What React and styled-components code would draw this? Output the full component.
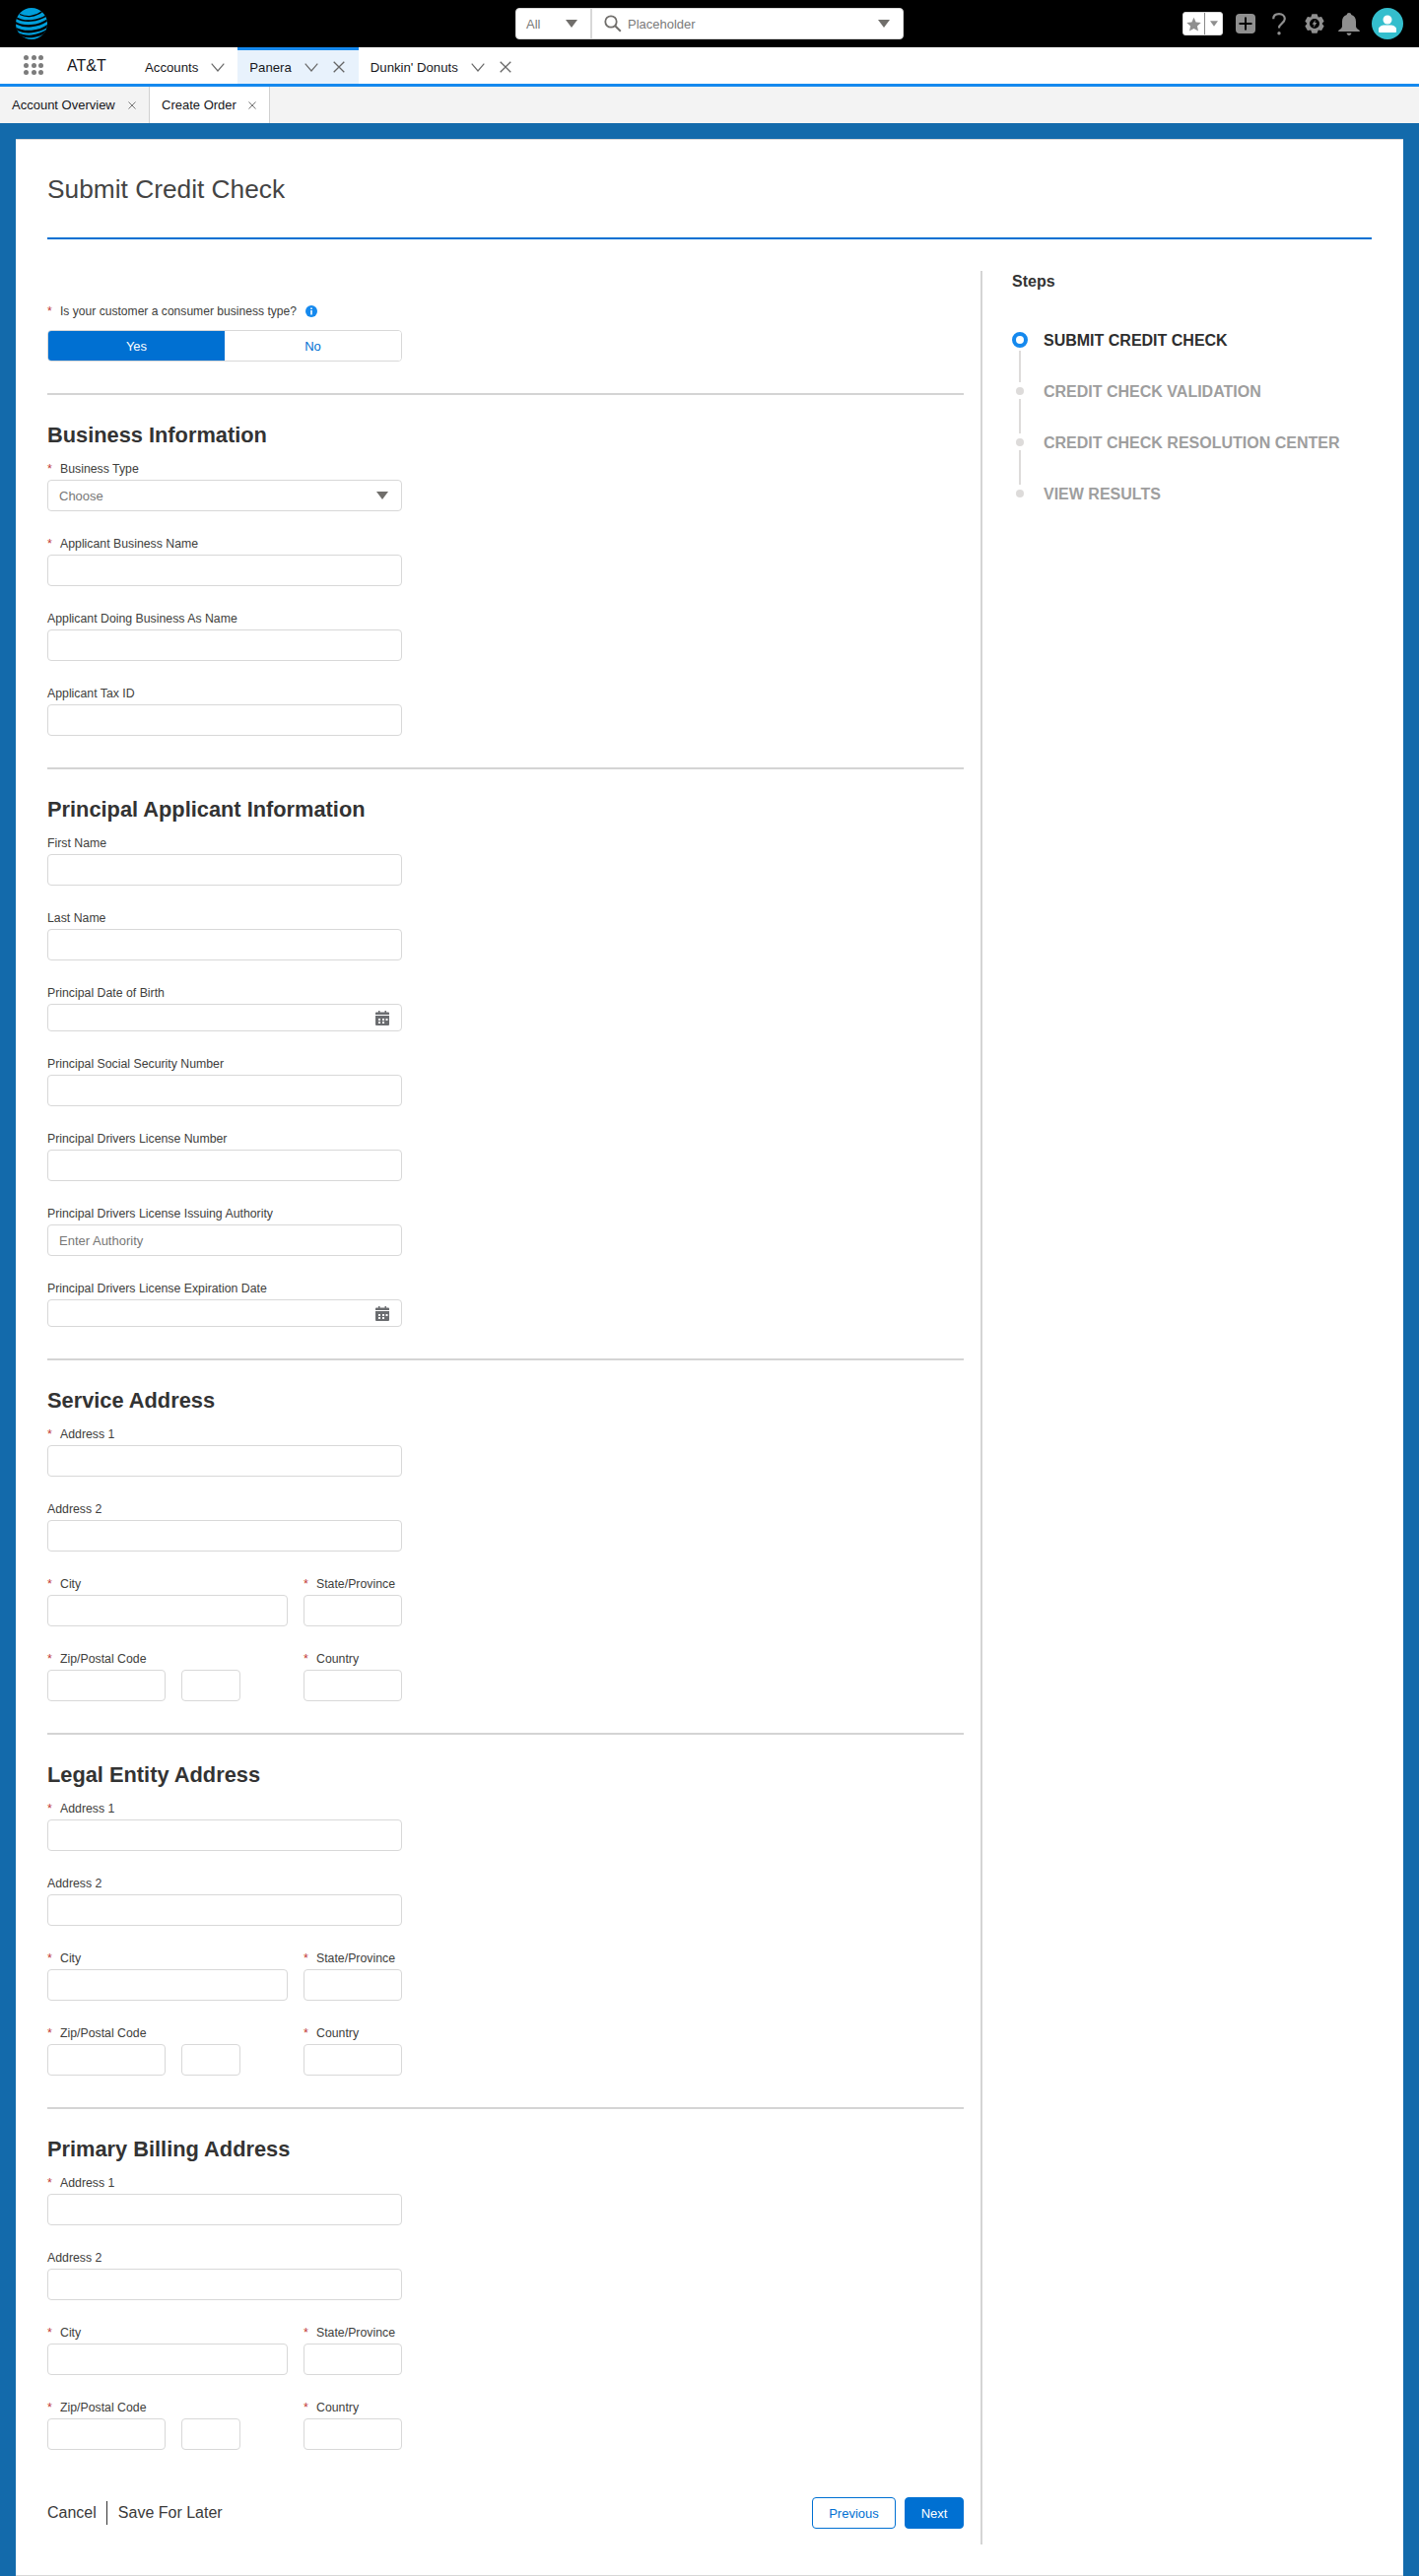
import styled, { createGlobalStyle } from "styled-components";

const GlobalStyle = createGlobalStyle`
  html, body {
    margin: 0;
    padding: 0;
    background: #136aab;
    font-family: "Liberation Sans", Arial, sans-serif;
    color: #3e3e3c;
  }
  * {
    box-sizing: border-box;
  }
`;

const Header = styled.header`
  height: 48px;
  background: #000;
  display: grid;
  grid-template-columns: 1fr 394px 1fr;
  align-items: center;
  padding: 0 16px;
`;

const SearchBox = styled.div`
  height: 32px;
  background: #fff;
  border: 1px solid #d8d8d8;
  border-radius: 4px;
  display: flex;
  align-items: center;
  font-size: 13px;
`;

const ScopeSelect = styled.div`
  width: 77px;
  height: 100%;
  flex: none;
  display: flex;
  align-items: center;
  justify-content: space-between;
  padding: 0 13px 0 10px;
  border-right: 2px solid #d8d8d8;
  color: #7a7a7a;
`;

const SearchGlyph = styled.svg`
  margin-left: 12px;
  flex: none;
`;

const SearchInput = styled.input`
  flex: 1;
  min-width: 0;
  border: 0;
  outline: 0;
  background: transparent;
  font: inherit;
  padding: 0 0 0 6px;
  &::placeholder {
    color: #7a7a7a;
    opacity: 1;
  }
`;

const SearchCaret = styled.span`
  display: flex;
  margin-right: 13px;
`;

const UtilityBar = styled.div`
  display: flex;
  align-items: center;
  justify-content: flex-end;
`;

const FavButton = styled.div`
  width: 41px;
  height: 24px;
  background: #fff;
  border: 1px solid #d8d8d8;
  border-radius: 3px;
  display: grid;
  grid-template-columns: 22px 1fr;
  align-items: center;
  justify-items: center;
  & > span:first-child {
    border-right: 1px solid #8a8a8a;
    width: 100%;
    height: 100%;
    display: flex;
    align-items: center;
    justify-content: center;
  }
`;

const UtilityIcon = styled.svg`
  display: block;
  flex: none;
  margin-left: ${(p) => p.$gap}px;
`;

const Avatar = styled.div`
  width: 32px;
  height: 32px;
  margin-left: 12px;
  border-radius: 50%;
  background: #34becd;
  display: flex;
  align-items: center;
  justify-content: center;
`;

const Nav = styled.nav`
  height: 40px;
  background: #fff;
  border-bottom: 3px solid #1589ee;
  display: flex;
  align-items: stretch;
  padding-left: 24px;
`;

const AppLauncher = styled.div`
  width: 20px;
  height: 20px;
  margin-top: 8px;
  display: grid;
  grid-template-columns: repeat(3, 5px);
  grid-template-rows: repeat(3, 5px);
  justify-content: space-between;
  align-content: space-between;
  & > i {
    border-radius: 50%;
    background: #7c7c7c;
  }
`;

const AppName = styled.div`
  font-size: 16px;
  line-height: 37px;
  color: #16161a;
  width: 43px;
  margin: 0 24px;
`;

const NavTab = styled.div`
  display: flex;
  align-items: center;
  padding: 0 ${(p) => (p.$closable ? 14 : 13)}px 0 12px;
  font-size: 13.2px;
  color: #16161a;
  background: ${(p) => (p.$active ? "#e8f2fc" : "transparent")};
  border-top: 3px solid ${(p) => (p.$active ? "#1589ee" : "transparent")};
  & > svg:first-of-type {
    margin-left: 13px;
  }
  & > svg:nth-of-type(2) {
    margin-left: 15px;
  }
`;

const SubTabs = styled.div`
  height: 37px;
  background: #f3f3f3;
  display: flex;
`;

const SubTab = styled.div`
  display: flex;
  align-items: center;
  justify-content: space-between;
  width: ${(p) => p.$width}px;
  padding: 0 13px 0 12px;
  font-size: 13px;
  color: #16161a;
  background: ${(p) => (p.$active ? "#fff" : "transparent")};
  border-right: 1px solid #d0d0d0;
`;

const Card = styled.main`
  margin: 16px 16px 0;
  background: #fff;
  border-top: 1px solid #d8d8d8;
  border-bottom: 1px solid #d8d8d8;
  padding: 33px 32px 31px;
`;

const PageTitle = styled.h1`
  margin: 0;
  height: 66px;
  font-size: 26.3px;
  line-height: 34px;
  font-weight: 400;
  color: #444;
`;

const TitleRule = styled.div`
  height: 2px;
  background: #0070d2;
`;

const Columns = styled.div`
  margin-top: 32px;
  display: flex;
`;

const FormColumn = styled.form`
  width: 930px;
  flex: none;
  display: flex;
  flex-direction: column;
  padding: 33px 0 16px;
`;

const Sidebar = styled.aside`
  margin-left: 17px;
  border-left: 2px solid #d4d4d4;
  padding-left: 30px;
  flex: 1;
`;

const SidebarTitle = styled.h3`
  margin: 0 0 40px;
  font-size: 16px;
  line-height: 22px;
  font-weight: 700;
  color: #333;
`;

const Step = styled.div`
  display: grid;
  grid-template-columns: 16px 1fr;
  column-gap: 16px;
`;

const DotCell = styled.div`
  height: 16px;
  display: flex;
  align-items: center;
  justify-content: center;
`;

const Dot = styled.span`
  display: block;
  border-radius: 50%;
  width: ${(p) => (p.$active ? 16 : 8)}px;
  height: ${(p) => (p.$active ? 16 : 8)}px;
  background: ${(p) => (p.$active ? "#fff" : "#dddbda")};
  border: ${(p) => (p.$active ? "4px solid #1589ee" : "0")};
`;

const StepName = styled.div`
  height: 16px;
  font-size: 16px;
  line-height: 18px;
  font-weight: 700;
  color: ${(p) => (p.$active ? "#2e2e2e" : "#9e9e9e")};
`;

const Connector = styled.div`
  grid-column: 1;
  justify-self: center;
  width: 2px;
  height: ${(p) => (p.$active ? 32 : 35)}px;
  margin: ${(p) => (p.$active ? "3px 0 1px" : "0 0 1px")};
  background: #dddbda;
`;

const Field = styled.div`
  width: ${(p) => p.$width || 360}px;
  margin-bottom: 25px;
`;

const Label = styled.label`
  display: block;
  font-size: ${(p) => (p.$question ? 12.1 : 12.3)}px;
  line-height: 16px;
  margin-bottom: ${(p) => (p.$question ? 11 : 3)}px;
  color: #3e3e3c;
  white-space: nowrap;
`;

const Required = styled.span`
  display: inline-block;
  width: 13px;
  color: #c23934;
`;

const InfoDot = styled.svg`
  vertical-align: -2px;
  margin-left: 9px;
`;

const Toggle = styled.div`
  width: 360px;
  height: 32px;
  display: grid;
  grid-template-columns: 1fr 1fr;
  border: 1px solid #d8d8d8;
  border-radius: 4px;
  overflow: hidden;
`;

const ToggleOption = styled.div`
  display: flex;
  align-items: center;
  justify-content: center;
  font-size: 13px;
  background: ${(p) => (p.$on ? "#0070d2" : "#fff")};
  color: ${(p) => (p.$on ? "#fff" : "#0070d2")};
`;

const Input = styled.input`
  display: block;
  width: 100%;
  height: 32px;
  border: 1px solid #d8d8d8;
  border-radius: 4px;
  background: #fff;
  padding: 0 11px;
  font: inherit;
  font-size: 13px;
  outline: 0;
  &::placeholder {
    color: #777;
    opacity: 1;
  }
`;

const SelectBox = styled.div`
  height: 32px;
  border: 1px solid #d8d8d8;
  border-radius: 4px;
  padding: 0 13px 0 11px;
  display: flex;
  align-items: center;
  justify-content: space-between;
  font-size: 13px;
  color: #777;
`;

const DateBox = styled.div`
  height: 28px;
  border: 1px solid #d8d8d8;
  border-radius: 4px;
  padding: 0 12px;
  display: flex;
  align-items: center;
  justify-content: flex-end;
`;

const Rule = styled.div`
  height: 2px;
  margin-top: 7px;
  background: #d4d4d4;
`;

const SectionTitle = styled.h2`
  margin: 25px 0 10px;
  font-size: 21.8px;
  line-height: 32px;
  font-weight: 700;
  color: #333;
`;

const FieldRow = styled.div`
  width: 360px;
  display: flex;
  gap: 16px;
`;

const ZipInputs = styled.div`
  display: flex;
  gap: 16px;
  & > input:first-child {
    width: 120px;
  }
  & > input:last-child {
    width: 60px;
  }
`;

const Footer = styled.div`
  margin-top: 23px;
  display: flex;
  align-items: center;
  justify-content: space-between;
`;

const FooterLinks = styled.div`
  display: flex;
  align-items: center;
  font-size: 16px;
  color: #3a3a3a;
  & > span + span {
    margin-left: 10px;
    padding-left: 11px;
    border-left: 1px solid #333;
    line-height: 24px;
  }
`;

const Buttons = styled.div`
  display: flex;
  gap: 9px;
`;

const Button = styled.button`
  width: ${(p) => p.$width}px;
  height: 32px;
  padding: 0;
  border: 1px solid #0070d2;
  border-radius: 4px;
  font: inherit;
  font-size: 13px;
  background: ${(p) => (p.$primary ? "#0070d2" : "#fff")};
  color: ${(p) => (p.$primary ? "#fff" : "#0070d2")};
`;

function Caret({ w = 12, h = 8, color = "#706e6b" }) {
  return (
    <svg width={w} height={h} viewBox="0 0 12 8">
      <path d="M0 0h12L6 8z" fill={color} />
    </svg>
  );
}

function Chevron() {
  return (
    <svg width="14" height="9" viewBox="0 0 14 9" fill="none">
      <path d="M.7.7 7 8 13.3.7" stroke="#6b6b6b" strokeWidth="1.2" />
    </svg>
  );
}

function Close({ size = 12, color = "#666" }) {
  return (
    <svg width={size} height={size} viewBox="0 0 12 12" fill="none">
      <path d="M.7.7l10.6 10.6M11.3.7.7 11.3" stroke={color} strokeWidth={size < 10 ? 1.5 : 1.3} />
    </svg>
  );
}

function Calendar() {
  return (
    <svg width="14" height="15" viewBox="0 0 14 15">
      <path
        fill="#6b6d70"
        d="M3 0h1.500v1.500h5V0H11v1.500h2A1 1 0 0 1 14 2.500V4H0V2.500a1 1 0 0 1 1-1h2zM0 5h14v9a1 1 0 0 1-1 1H1a1 1 0 0 1-1-1zm3 6v2h2v-2zm0-3v2h2V8zm4 3v2h2v-2zm0-3v2h2V8zm3.500 0v2h2V8z"
      />
    </svg>
  );
}

// six toothed gear outline, centred on 10,10
function gearPath() {
  const pts = [];
  for (let i = 0; i < 6; i++) {
    const a = (i * Math.PI) / 3 - Math.PI / 2;
    [
      [-0.52, 7.6],
      [-0.26, 10],
      [0.26, 10],
      [0.52, 7.6],
    ].forEach(([da, r]) => {
      pts.push(`${(10 + r * Math.cos(a + da)).toFixed(2)} ${(10 + r * Math.sin(a + da)).toFixed(2)}`);
    });
  }
  return `M${pts.join("L")}Z M10 5a5 5 0 1 0 0 10a5 5 0 1 0 0-10Z`;
}

function AttLogo() {
  return (
    <svg width="32" height="32" viewBox="0 0 32 32" style={{ display: "block" }}>
      <defs>
        <clipPath id="globe">
          <circle cx="16" cy="16" r="16" />
        </clipPath>
      </defs>
      <g clipPath="url(#globe)">
        <rect width="32" height="32" fill="#009fdb" />
        <g fill="none" stroke="#000">
          <path d="M4 6.500C11 10 20 9 27 3.500" strokeWidth="1.300" />
          <path d="M-1 9C8 15.500 23 14 33 6.500" strokeWidth="1.700" />
          <path d="M-2 14C8 21 24 19 34 11" strokeWidth="2.200" />
          <path d="M-2 20C8 26.500 24 25 34 17" strokeWidth="2.600" />
          <path d="M1 25.500C10 31 22 30 33 22.500" strokeWidth="2.600" />
        </g>
      </g>
    </svg>
  );
}

function FormField({ label, required, width, children }) {
  return (
    <Field $width={width}>
      <Label>
        {required && <Required>*</Required>}
        {label}
      </Label>
      {children}
    </Field>
  );
}

function DateField({ label }) {
  return (
    <FormField label={label}>
      <DateBox>
        <Calendar />
      </DateBox>
    </FormField>
  );
}

function AddressSection({ title }) {
  return (
    <>
      <Rule />
      <SectionTitle>{title}</SectionTitle>
      <FormField label="Address 1" required>
        <Input />
      </FormField>
      <FormField label="Address 2">
        <Input />
      </FormField>
      <FieldRow>
        <FormField label="City" required width={244}>
          <Input />
        </FormField>
        <FormField label="State/Province" required width={100}>
          <Input />
        </FormField>
      </FieldRow>
      <FieldRow>
        <FormField label="Zip/Postal Code" required width={244}>
          <ZipInputs>
            <Input />
            <Input />
          </ZipInputs>
        </FormField>
        <FormField label="Country" required width={100}>
          <Input />
        </FormField>
      </FieldRow>
    </>
  );
}

const steps = [
  "SUBMIT CREDIT CHECK",
  "CREDIT CHECK VALIDATION",
  "CREDIT CHECK RESOLUTION CENTER",
  "VIEW RESULTS",
];

export default function App() {
  return (
    <>
      <GlobalStyle />
      <Header>
        <AttLogo />
        <SearchBox>
          <ScopeSelect>
            All
            <Caret />
          </ScopeSelect>
          <SearchGlyph width="18" height="18" viewBox="0 0 18 18" fill="none">
            <circle cx="7" cy="7" r="5.700" stroke="#706e6b" strokeWidth="1.800" />
            <path d="M11.200 11.200 16.800 16.800" stroke="#706e6b" strokeWidth="2" />
          </SearchGlyph>
          <SearchInput placeholder="Placeholder" />
          <SearchCaret>
            <Caret />
          </SearchCaret>
        </SearchBox>
        <UtilityBar>
          <FavButton>
            <span>
              <svg width="15" height="15" viewBox="0 0 24 24">
                <path fill="#8f8f8f" d="M12 1l3.400 7.600 8.200.9-6.100 5.500 1.700 8.100L12 19l-7.200 4.100 1.700-8.100L.4 9.500l8.200-.9z" />
              </svg>
            </span>
            <Caret w={8} h={6} color="#8f8f8f" />
          </FavButton>
          <UtilityIcon $gap={13} width="20" height="20" viewBox="0 0 20 20">
            <rect width="20" height="20" rx="4" fill="#8f8f8f" />
            <path d="M10 3.500v13M3.500 10h13" stroke="#000" strokeWidth="2" />
          </UtilityIcon>
          <UtilityIcon $gap={17} width="14" height="23" viewBox="0 0 14 23" fill="none">
            <path d="M1.200 6.200C1.200 3 3.600 1.200 7 1.200s5.800 1.900 5.800 4.900c0 4.500-5.800 4.600-5.800 9.400" stroke="#8f8f8f" strokeWidth="2.200" />
            <circle cx="7" cy="20.800" r="1.700" fill="#8f8f8f" />
          </UtilityIcon>
          <UtilityIcon $gap={19} width="20" height="20" viewBox="0 0 20 20">
            <path fill="#8f8f8f" fillRule="evenodd" d={gearPath()} />
            <path fill="#8f8f8f" d="M10.900 6 7.600 10.800h2l-.6 3.200 3.300-4.900h-2z" />
          </UtilityIcon>
          <UtilityIcon $gap={14} width="22" height="23" viewBox="0 0 22 23">
            <path fill="#8f8f8f" d="M11 0c1.300 0 2.200.8 2.300 2 3.200.9 4.700 3.500 4.700 7v4.500c0 2 1.600 3.100 3.500 4.200.5.300.5 1.300-.3 1.300H.8c-.8 0-.8-1-.3-1.300C2.400 16.600 4 15.500 4 13.500V9c0-3.500 1.500-6.100 4.700-7 .1-1.200 1-2 2.300-2zM8.500 20.500h5C13.200 22 12.300 23 11 23s-2.200-1-2.500-2.500z" />
          </UtilityIcon>
          <Avatar>
            <svg width="18" height="18" viewBox="0 0 18 18">
              <circle cx="9" cy="5" r="4.500" fill="#fff" />
              <path fill="#fff" d="M0 14.500C0 12 3.500 10.500 6 10.500h6c2.500 0 6 1.500 6 4V17a1 1 0 0 1-1 1H1a1 1 0 0 1-1-1z" />
            </svg>
          </Avatar>
        </UtilityBar>
      </Header>
      <Nav>
        <AppLauncher>
          {Array.from({ length: 9 }, (_, i) => (
            <i key={i} />
          ))}
        </AppLauncher>
        <AppName>AT&amp;T</AppName>
        <NavTab>
          Accounts
          <Chevron />
        </NavTab>
        <NavTab $active $closable>
          Panera
          <Chevron />
          <Close />
        </NavTab>
        <NavTab $closable>
          Dunkin' Donuts
          <Chevron />
          <Close />
        </NavTab>
      </Nav>
      <SubTabs>
        <SubTab $width={152}>
          Account Overview
          <Close size={8} color="#777" />
        </SubTab>
        <SubTab $width={122} $active>
          Create Order
          <Close size={8} color="#777" />
        </SubTab>
      </SubTabs>
      <Card>
        <PageTitle>Submit Credit Check</PageTitle>
        <TitleRule />
        <Columns>
          <FormColumn>
            <Field>
              <Label $question>
                <Required>*</Required>
                Is your customer a consumer business type?
                <InfoDot width="12" height="12" viewBox="0 0 12 12">
                  <circle cx="6" cy="6" r="6" fill="#1589ee" />
                  <path d="M5.200 2.500h1.600V4H5.200zM5.200 5h1.600v4.500H5.200z" fill="#fff" />
                </InfoDot>
              </Label>
              <Toggle>
                <ToggleOption $on>Yes</ToggleOption>
                <ToggleOption>No</ToggleOption>
              </Toggle>
            </Field>

            <Rule />
            <SectionTitle>Business Information</SectionTitle>
            <FormField label="Business Type" required>
              <SelectBox>
                Choose
                <Caret />
              </SelectBox>
            </FormField>
            <FormField label="Applicant Business Name" required>
              <Input />
            </FormField>
            <FormField label="Applicant Doing Business As Name">
              <Input />
            </FormField>
            <FormField label="Applicant Tax ID">
              <Input />
            </FormField>

            <Rule />
            <SectionTitle>Principal Applicant Information</SectionTitle>
            <FormField label="First Name">
              <Input />
            </FormField>
            <FormField label="Last Name">
              <Input />
            </FormField>
            <DateField label="Principal Date of Birth" />
            <FormField label="Principal Social Security Number">
              <Input />
            </FormField>
            <FormField label="Principal Drivers License Number">
              <Input />
            </FormField>
            <FormField label="Principal Drivers License Issuing Authority">
              <Input placeholder="Enter Authority" />
            </FormField>
            <DateField label="Principal Drivers License Expiration Date" />

            <AddressSection title="Service Address" />
            <AddressSection title="Legal Entity Address" />
            <AddressSection title="Primary Billing Address" />

            <Footer>
              <FooterLinks>
                <span>Cancel</span>
                <span>Save For Later</span>
              </FooterLinks>
              <Buttons>
                <Button type="button" $width={85}>Previous</Button>
                <Button type="button" $width={60} $primary>Next</Button>
              </Buttons>
            </Footer>
          </FormColumn>
          <Sidebar>
            <SidebarTitle>Steps</SidebarTitle>
            {steps.map((name, i) => (
              <Step key={name}>
                <DotCell>
                  <Dot $active={i === 0} />
                </DotCell>
                <StepName $active={i === 0}>{name}</StepName>
                {i < steps.length - 1 && <Connector $active={i === 0} />}
              </Step>
            ))}
          </Sidebar>
        </Columns>
      </Card>
    </>
  );
}
